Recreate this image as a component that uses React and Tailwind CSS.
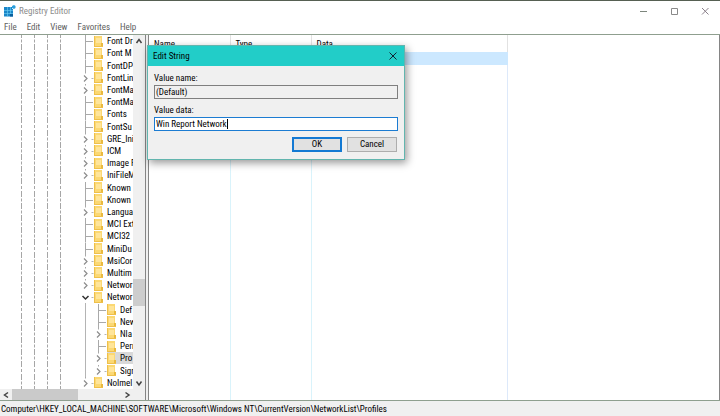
import React from "react";

const TREE = [
  ["Font Dr"], ["Font M"], ["FontDP"], ["FontLin", "closed"],
  ["FontMa", "closed"], ["FontMa"], ["Fonts"], ["FontSu"],
  ["GRE_Ini", "closed"], ["ICM", "closed"], ["Image F", "closed"],
  ["IniFileM", "closed"], ["Known"], ["Known"],
  ["Langua", "closed"], ["MCI Ext"], ["MCI32"], ["MiniDu"],
  ["MsiCor", "closed"], ["Multim", "closed"],
  ["Networ", "closed"], ["Networ", "open"],
  ["Def", null, true], ["New", null, true],
  ["Nla", "closed", true], ["Perr", null, true],
  ["Pro", "closed", true], ["Sigr", "closed", true],
  ["NoImel", "closed"],
];

function Branch({ state }) {
  return (
    <svg viewBox="0 0 15 12" className="h-3 w-[15px] shrink-0 overflow-visible" fill="none">
      {state ? (
        <path d="M12.5 6.5h2" stroke="#b4b4b4" />
      ) : (
        <path d="M6.5 0v12.5M7 6.5h7" stroke="#a9a9a9" />
      )}
      {state === "closed" && (
        <>
          <path d="M6.5 0v1.500" stroke="#a9a9a9" />
          <path d="M5 3.5l3 3-3 3" stroke="#8c8c8c" strokeWidth="1.2" />
        </>
      )}
      {state === "open" && <path d="M3.5 5l3 3 3-3" stroke="#333" strokeWidth="1.5" />}
    </svg>
  );
}

function Folder() {
  return (
    <svg viewBox="0 0 9 11" className="h-[11px] w-[9px] shrink-0">
      <path d="M0 0h8v7h1v4H0z" fill="#fbd873" />
      <path d="M0 0h1v11H0zM0 10h9v1H0z" fill="#efc04a" />
      <path d="M7 7h2v3H7z" fill="#e9b93f" />
      <path d="M2 2h5v5H2z" fill="#ffe59a" />
    </svg>
  );
}

function Guide() {
  return <span className="w-[13px] shrink-0 self-stretch border-l border-dashed border-[#a6a6a6]" />;
}

function TreeRow({ name, state, child }) {
  const selected = name === "Pro";
  return (
    <li role="treeitem" aria-selected={selected} className="flex min-h-0 flex-1 items-center pl-[21px]">
      <Guide />
      <Guide />
      <Guide />
      <span className="w-[19px] shrink-0 self-stretch border-l border-dashed border-[#a6a6a6]" />
      {child && (
        <span className="flex w-[13px] shrink-0 self-stretch pl-1.5">
          <span className="border-l border-[#b4b4b4]" />
        </span>
      )}
      <Branch state={state} />
      <span className={"flex flex-1 items-center gap-1 self-stretch whitespace-nowrap " + (selected ? "bg-[#d9d9d9]" : "")}>
        <Folder />
        {name}
      </span>
    </li>
  );
}

function Chevron({ d }) {
  return (
    <svg viewBox="0 0 8 8" className="size-2" fill="none" stroke="#444" strokeWidth="1.5">
      <path d={d} />
    </svg>
  );
}

function TitleBar() {
  return (
    <header className="flex h-5 shrink-0 items-center border-t border-[#566052] pl-1 text-[#8c8c8c]">
      <svg viewBox="0 0 12 12" className="size-3 shrink-0">
        <path d="M0 2h8v2h1v7.500H0z" fill="#1a86c8" />
        <path d="M3.5 2v9.500M6.500 2v9.500M0 5.500h9M0 8.500h9" stroke="#6fd0f5" strokeWidth=".6" />
        <path d="M8 1l2-1 1.500 1v2L10 4 8 3z" fill="#2a9fdc" />
        <path d="M6 9h3v2.500H6z" fill="#0b5f9c" />
      </svg>
      <h1 className="flex-1 pl-[3px]">Registry Editor</h1>
      <div className="flex">
        <button aria-label="Minimize" className="flex w-[31px] justify-center">
          <svg viewBox="0 0 8 8" className="size-2" stroke="#7d867d"><path d="M1 4.500h7" /></svg>
        </button>
        <button aria-label="Maximize" className="flex w-[31px] justify-center">
          <svg viewBox="0 0 8 8" className="size-2" stroke="#8a8a8a" fill="none"><path d="M1.500 1.500h6v6h-6z" /></svg>
        </button>
        <button aria-label="Close" className="flex w-[31px] justify-center">
          <svg viewBox="0 0 8 8" className="size-2" stroke="#8a808a"><path d="M1 1l6.500 6.500M7.500 1L1 7.500" /></svg>
        </button>
      </div>
    </header>
  );
}

function TreePane() {
  return (
    <section className="flex w-[146px] shrink-0 flex-col border-r border-[#858585] bg-white">
      <div className="flex min-h-0 flex-1">
        <ul role="tree" className="flex min-w-0 flex-1 flex-col overflow-hidden">
          {TREE.map(([name, state, child], i) => (
            <TreeRow key={i} name={name} state={state} child={child} />
          ))}
        </ul>
        <div className="flex w-3 shrink-0 flex-col items-center bg-[#f0f0f0]">
          <button aria-label="Scroll up" className="flex h-3 items-center"><Chevron d="M1.500 6L4 2.500 6.500 6" /></button>
          <div className="flex-[232]" />
          <div className="w-full flex-[27] bg-[#cdcdcd]" />
          <div className="flex-[71]" />
          <button aria-label="Scroll down" className="flex h-3 items-center"><Chevron d="M1.500 2.500L4 6l2.500-3.500" /></button>
        </div>
      </div>
      <div className="flex h-[11px] shrink-0 bg-[#f0f0f0]">
        <button aria-label="Scroll left" className="flex w-3 items-center justify-center"><Chevron d="M6 1.500L2.500 4 6 6.500" /></button>
        <div className="w-[66px] bg-[#cacaca]" />
        <div className="flex-1" />
        <button aria-label="Scroll right" className="flex w-3 items-center justify-center"><Chevron d="M2.500 1.500L6 4 2.500 6.500" /></button>
        <div className="w-3" />
      </div>
    </section>
  );
}

function ValuesPane() {
  return (
    <section className="min-w-0 flex-1 border-x border-[#858585] bg-white">
      <table className="h-full w-[359px] table-fixed border-collapse text-left">
        <colgroup>
          <col className="w-[81px]" />
          <col className="w-[81px]" />
          <col />
        </colgroup>
        <thead>
          <tr className="h-[17px]">
            <th className="border-r border-[#e2e2e2] p-0 pl-[5px] font-normal">Name</th>
            <th className="border-r border-[#e2e2e2] p-0 pl-[5px] font-normal">Type</th>
            <th className="border-r border-[#e2e2e2] p-0 pl-[5px] font-normal">Data</th>
          </tr>
        </thead>
        <tbody>
          <tr className="h-[13px] bg-[#cce8ff]">
            <td className="p-0" /><td className="p-0" /><td className="p-0" />
          </tr>
          <tr>
            <td className="border-r border-[#d9f3fb] p-0" />
            <td className="border-r border-[#d9f3fb] p-0" />
            <td className="border-r border-[#dde9fa] p-0" />
          </tr>
        </tbody>
      </table>
    </section>
  );
}

function EditDialog() {
  return (
    <form
      role="dialog"
      aria-label="Edit String"
      className="absolute top-[45px] left-[147px] w-[258px] border border-[#62b5ae] bg-[#f0f0f0] font-['Roboto_Condensed','Roboto',sans-serif] text-[9px] leading-3 shadow-[2px_3px_8px_rgba(0,0,0,0.4)]"
    >
      <div className="flex h-5 items-center justify-between bg-[#22cdc8] pr-[7px] pl-[5px]">
        <h2>Edit String</h2>
        <button type="button" aria-label="Close dialog">
          <svg viewBox="0 0 8 8" className="size-2" stroke="#123"><path d="M.5.5l7 7M7.500.5l-7 7" /></svg>
        </button>
      </div>
      <div className="flex flex-col px-1.5 pt-1.5 pb-[7px]">
        <label htmlFor="value-name">Value name:</label>
        <input id="value-name" readOnly defaultValue="(Default)" className="mt-[1px] h-3.5 border border-[#7f7f7f] bg-[#f0f0f0] px-[1px]" />
        <label htmlFor="value-data" className="mt-[5px]">Value data:</label>
        <div className="mt-[1px] flex h-3.5 items-center border border-[#1c7cd2] bg-white px-[1px]">
          <input id="value-data" defaultValue="Win Report Network" className="field-sizing-content outline-none" />
          <span className="h-2.5 w-px bg-black" />
        </div>
        <div className="mt-1.5 flex justify-end gap-[5px] pr-[1px]">
          <button type="submit" className="h-[15px] w-[50px] border-2 border-[#1379d3] bg-[#e1e1e1] leading-none">OK</button>
          <button type="button" className="h-[15px] w-[50px] border border-[#adadad] bg-[#e1e1e1] leading-none">Cancel</button>
        </div>
      </div>
    </form>
  );
}

export default function App() {
  return (
    <div className="relative flex h-screen flex-col overflow-hidden bg-white font-['Noto_Sans_SemiCondensed','Roboto_Condensed','Lato',sans-serif] text-[9px] leading-3 text-black">
      <TitleBar />
      <nav className="flex h-3.5 shrink-0 items-center gap-2.5 pl-1 text-[#606060]">
        <button>File</button>
        <button>Edit</button>
        <button>View</button>
        <button>Favorites</button>
        <button>Help</button>
      </nav>
      <main className="flex min-h-0 flex-1 gap-0.5 border-y border-[#8f9f8f] bg-[#f0f0f0]">
        <TreePane />
        <ValuesPane />
      </main>
      <footer className="flex h-[15px] shrink-0 items-center bg-[#f0f0f0] pl-[1px]">
        Computer\HKEY_LOCAL_MACHINE\SOFTWARE\Microsoft\Windows NT\CurrentVersion\NetworkList\Profiles
      </footer>
      <EditDialog />
    </div>
  );
}
